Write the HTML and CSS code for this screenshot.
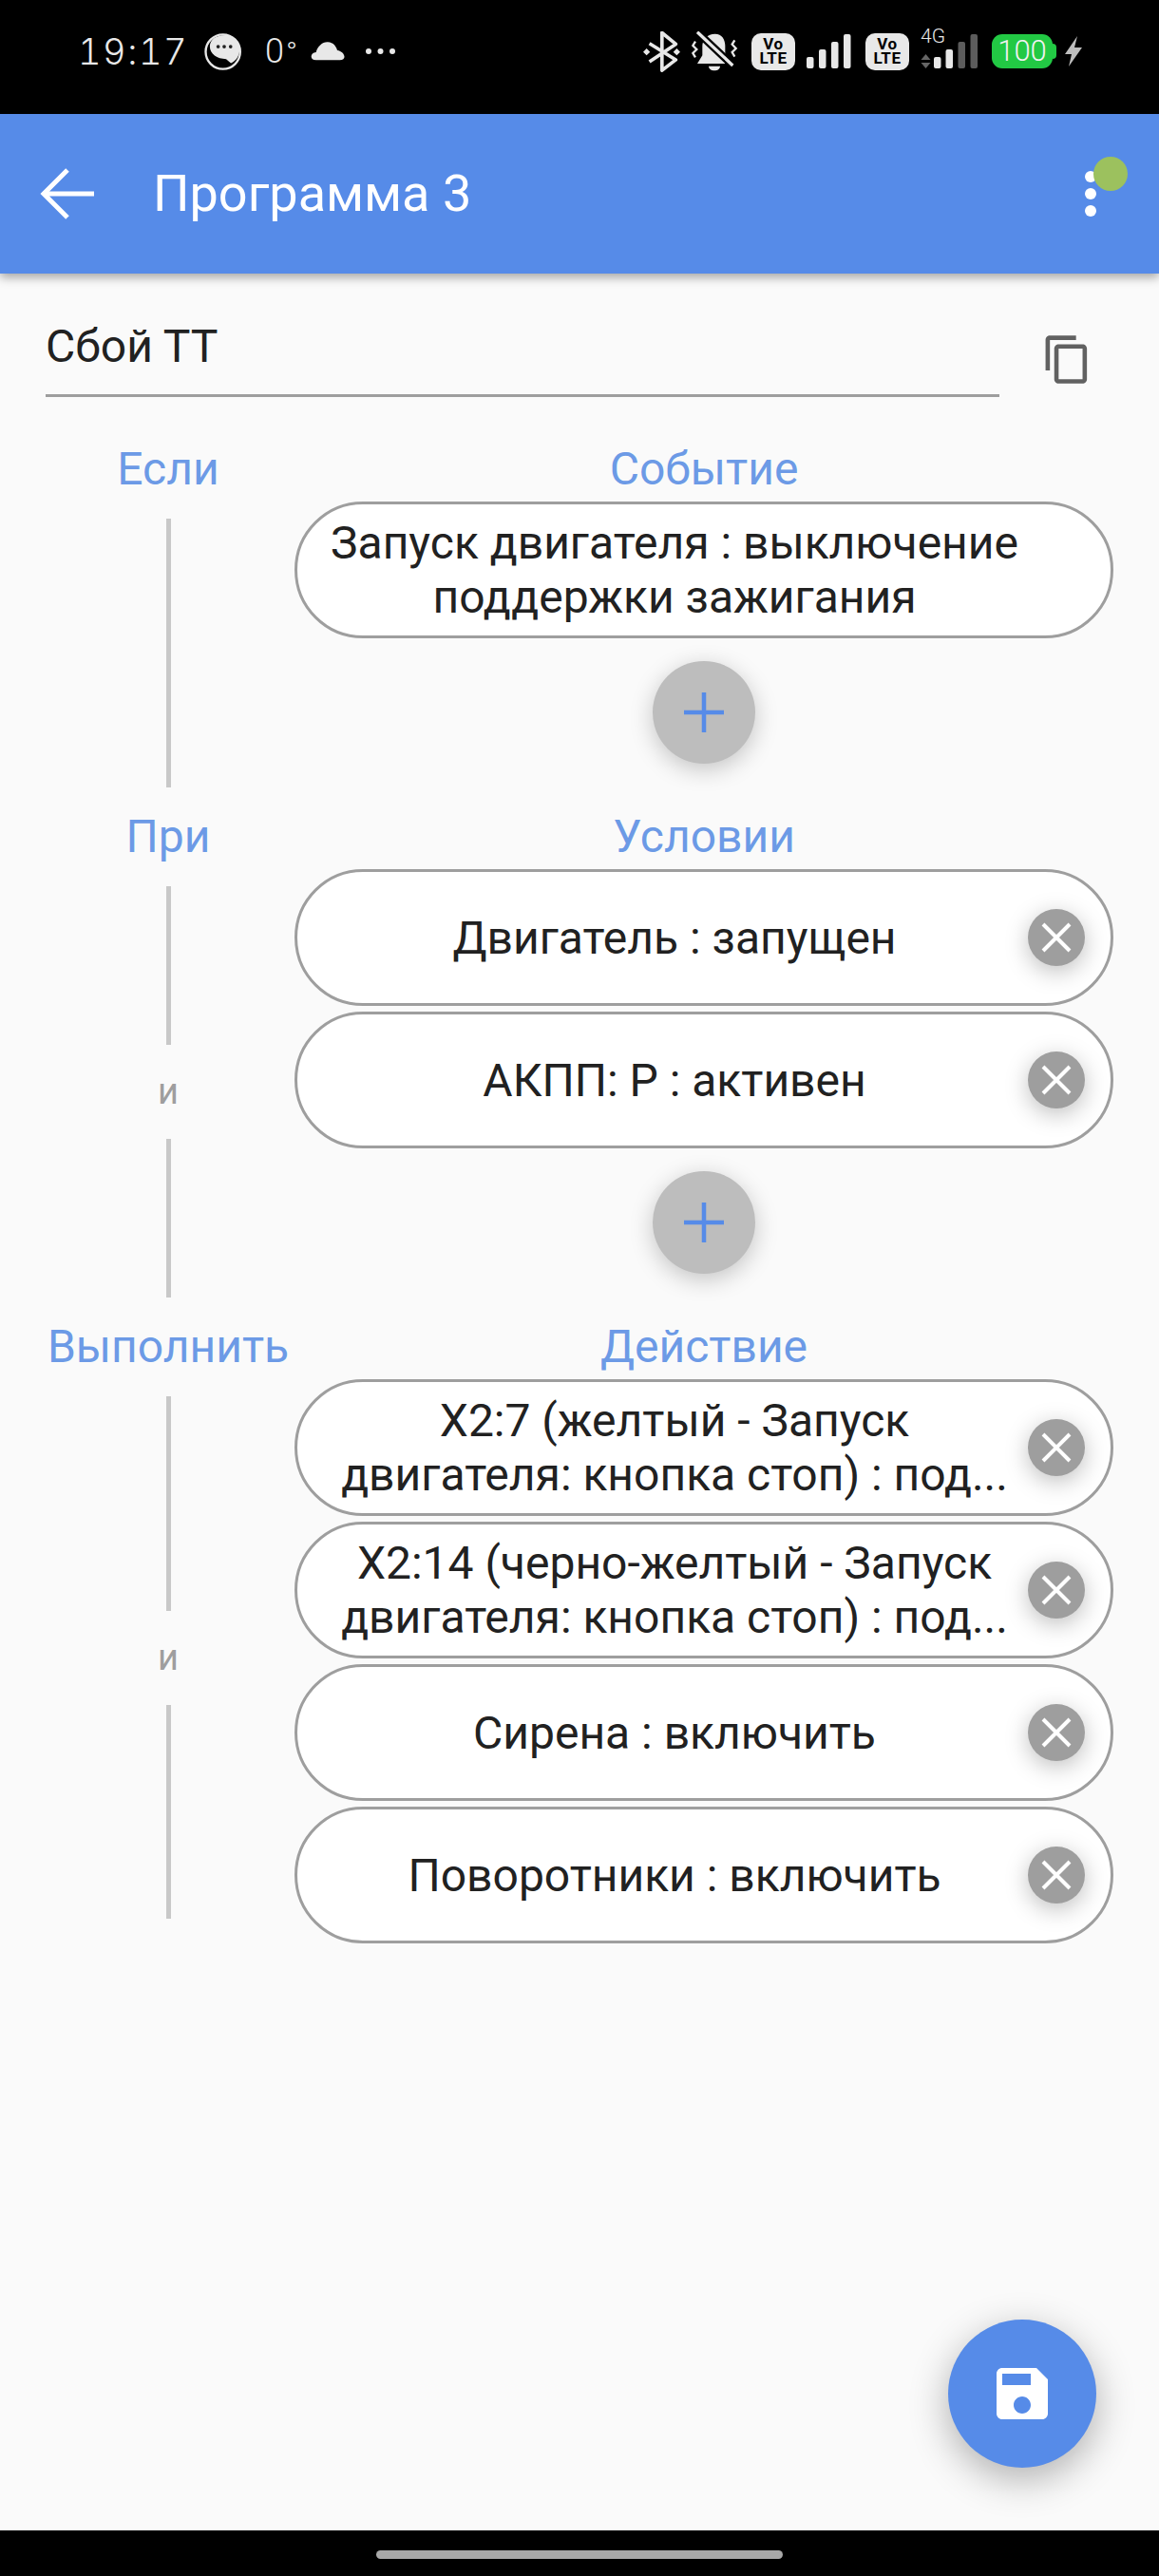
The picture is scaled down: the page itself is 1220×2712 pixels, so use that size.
FILE: index.html
```html
<!DOCTYPE html>
<html lang="en">
<head>
    <meta charset="UTF-8">
    <meta name="viewport" content="width=device-width, initial-scale=1.0">
    <title>Программа 3</title>
    <link rel="stylesheet" href="styles.css">
</head>
<body>
    <div class="screen">
        <div class="status-bar">
            <div class="status-left">
                <span class="time">19:17</span>
                <svg class="chat-icon" width="40" height="39" viewBox="435 30 118 116">
                    <circle cx="493" cy="88" r="54" fill="none" stroke="#e8e8e8" stroke-width="7"/>
                    <path d="M505 36C535 40 548 65 545 85 542 108 530 118 518 124L503 111C475 111 452 95 452 72 452 50 470 35 505 36z" fill="#e8e8e8"/>
                    <circle cx="478" cy="72" r="5.500" fill="#222"/>
                    <circle cx="497" cy="72" r="5.500" fill="#222"/>
                    <circle cx="517" cy="72" r="5.500" fill="#222"/>
                </svg>
                <span class="temp">0<span class="deg">°</span></span>
                <svg class="cloud-icon" width="36" height="20" viewBox="768 55 108 60">
                    <path d="M785 113C765 113 765 90 785 88 790 70 805 55 822 56 840 56 850 72 852 82 875 85 885 113 860 113z" fill="#e8e8e8"/>
                </svg>
                <svg class="more-icon" width="33" height="8" viewBox="0 0 33 8">
                    <circle cx="4" cy="4" r="3" fill="#e8e8e8"/>
                    <circle cx="16.500" cy="4" r="3" fill="#e8e8e8"/>
                    <circle cx="29" cy="4" r="3" fill="#e8e8e8"/>
                </svg>
            </div>
            <div class="status-right">
                <svg width="39" height="43" viewBox="22 22 118 129">
                    <path d="M42 60l84 52-44 34V26l44 36-84 56" fill="none" stroke="#e8e8e8" stroke-width="11" stroke-linejoin="round"/>
                    <path d="M33 76l11 11-11 11-11-11zM129 76l11 11-11 11-11-11z" fill="#e8e8e8"/>
                </svg>
                <svg width="51" height="42" viewBox="176 20 153 126">
                    <path d="M250 28c22 0 32 18 32 38v30l14 26H194l16-26V66c0-20 16-38 40-38z" fill="#e8e8e8"/>
                    <path d="M230 130h36c0 8-8 14-18 14s-18-6-18-14z" fill="#e8e8e8"/>
                    <path d="M194 22l112 106" stroke="#000" stroke-width="24"/>
                    <path d="M194 22l112 106" stroke="#e8e8e8" stroke-width="10"/>
                    <path d="M188 52l-8 13 12 12-12 12 8 13M312 48l-8 13 12 13-12 12 8 14" fill="none" stroke="#e8e8e8" stroke-width="7"/>
                </svg>
                <div class="volte"><span>Vo</span><span>LTE</span></div>
                <svg width="50" height="36" viewBox="0 0 50 36">
                    <rect x="0" y="24" width="7.500" height="12" rx="2" fill="#e8e8e8"/>
                    <rect x="13" y="16" width="7.500" height="20" rx="2" fill="#e8e8e8"/>
                    <rect x="26" y="8" width="7.500" height="28" rx="2" fill="#e8e8e8"/>
                    <rect x="39" y="0" width="7.500" height="36" rx="2" fill="#e8e8e8"/>
                </svg>
                <div class="volte"><span>Vo</span><span>LTE</span></div>
                <div class="net">
                    <span class="net-type">4G</span>
                    <svg class="net-arrows" width="11" height="15" viewBox="0 0 11 15">
                        <path d="M5.500 0l5 6H.5z" fill="#666"/>
                        <path d="M5.500 15l-5-6h10z" fill="#666"/>
                    </svg>
                    <svg class="net-bars" width="46" height="36" viewBox="0 0 46 36">
                        <rect x="0" y="24" width="7.500" height="12" rx="2" fill="#e8e8e8"/>
                        <rect x="12.500" y="16" width="7.500" height="20" rx="2" fill="#e8e8e8"/>
                        <rect x="25.500" y="8" width="7.500" height="28" rx="2" fill="#5c5c5c"/>
                        <rect x="38.500" y="0" width="7.500" height="36" rx="2" fill="#5c5c5c"/>
                    </svg>
                </div>
                <div class="battery"><span>100</span></div>
                <svg class="bolt" width="20" height="32" viewBox="0 0 20 32">
                    <path d="M14 0L1 19h7L5 32l14-20h-8z" fill="#bdbdbd"/>
                </svg>
            </div>
        </div>

        <div class="app-bar">
            <svg class="back" width="60" height="60" viewBox="0 0 60 60">
                <path d="M58 30H6M30 5L5 30l25 25" fill="none" stroke="#fff" stroke-width="5"/>
            </svg>
            <div class="app-title">Программа 3</div>
            <div class="menu">
                <div class="menu-dot"></div>
                <div class="menu-dot"></div>
                <div class="menu-dot"></div>
                <div class="online"></div>
            </div>
        </div>

        <div class="content">
            <div class="name-row">
                <div class="name-field">Сбой ТТ</div>
                <svg class="copy" width="55" height="55" viewBox="0 0 24 24">
                    <path d="M16 1H4c-1.100 0-2 .9-2 2v14h2V3h12V1zm3 4H8c-1.100 0-2 .9-2 2v14c0 1.100.9 2 2 2h11c1.100 0 2-.9 2-2V7c0-1.100-.9-2-2-2zm0 16H8V7h11v14z" fill="#616161"/>
                </svg>
            </div>

            <div class="section">
                <div class="side">
                    <div class="label">Если</div>
                    <div class="line"></div>
                </div>
                <div class="main">
                    <div class="label">Событие</div>
                    <div class="chip"><div class="chip-text">Запуск двигателя : выключение поддержки зажигания</div></div>
                    <div class="add"><svg width="42" height="42" viewBox="0 0 42 42"><path d="M21 0v42M0 21h42" stroke="#568be8" stroke-width="4.500"/></svg></div>
                </div>
            </div>

            <div class="section">
                <div class="side">
                    <div class="label">При</div>
                    <div class="line"></div>
                    <div class="and">и</div>
                    <div class="line"></div>
                </div>
                <div class="main">
                    <div class="label">Условии</div>
                    <div class="chip">
                        <div class="chip-text">Двигатель : запущен</div>
                        <div class="remove"><svg width="32" height="32" viewBox="0 0 32 32"><path d="M2 2l28 28M30 2L2 30" stroke="#fff" stroke-width="4"/></svg></div>
                    </div>
                    <div class="chip">
                        <div class="chip-text">АКПП: P : активен</div>
                        <div class="remove"><svg width="32" height="32" viewBox="0 0 32 32"><path d="M2 2l28 28M30 2L2 30" stroke="#fff" stroke-width="4"/></svg></div>
                    </div>
                    <div class="add"><svg width="42" height="42" viewBox="0 0 42 42"><path d="M21 0v42M0 21h42" stroke="#568be8" stroke-width="4.500"/></svg></div>
                </div>
            </div>

            <div class="section">
                <div class="side">
                    <div class="label">Выполнить</div>
                    <div class="line"></div>
                    <div class="and">и</div>
                    <div class="line"></div>
                </div>
                <div class="main">
                    <div class="label">Действие</div>
                    <div class="chip">
                        <div class="chip-text">X2:7 (желтый - Запуск двигателя: кнопка стоп) : под...</div>
                        <div class="remove"><svg width="32" height="32" viewBox="0 0 32 32"><path d="M2 2l28 28M30 2L2 30" stroke="#fff" stroke-width="4"/></svg></div>
                    </div>
                    <div class="chip">
                        <div class="chip-text">X2:14 (черно-желтый - Запуск двигателя: кнопка стоп) : под...</div>
                        <div class="remove"><svg width="32" height="32" viewBox="0 0 32 32"><path d="M2 2l28 28M30 2L2 30" stroke="#fff" stroke-width="4"/></svg></div>
                    </div>
                    <div class="chip">
                        <div class="chip-text">Сирена : включить</div>
                        <div class="remove"><svg width="32" height="32" viewBox="0 0 32 32"><path d="M2 2l28 28M30 2L2 30" stroke="#fff" stroke-width="4"/></svg></div>
                    </div>
                    <div class="chip">
                        <div class="chip-text">Поворотники : включить</div>
                        <div class="remove"><svg width="32" height="32" viewBox="0 0 32 32"><path d="M2 2l28 28M30 2L2 30" stroke="#fff" stroke-width="4"/></svg></div>
                    </div>
                </div>
            </div>

            <div class="fab">
                <svg width="72" height="72" viewBox="0 0 24 24">
                    <path d="M17 3H5c-1.110 0-2 .9-2 2v14c0 1.100.89 2 2 2h14c1.100 0 2-.9 2-2V7l-4-4zm-5 16c-1.660 0-3-1.340-3-3s1.340-3 3-3 3 1.340 3 3-1.340 3-3 3zm3-10H5V5h10v4z" fill="#fff"/>
                </svg>
            </div>
        </div>

        <div class="nav-bar">
            <div class="home-pill"></div>
        </div>
    </div>
</body>
</html>
```

FILE: styles.css
```css
body {
    margin: 0;
    overflow: hidden;
    font-family: Roboto, "Noto Sans", sans-serif;
    background: #000;
}

.screen {
    display: flex;
    flex-direction: column;
    width: 1220px;
    height: 2712px;
}

/* status bar */

.status-bar {
    display: flex;
    justify-content: space-between;
    align-items: center;
    height: 120px;
    padding: 0 80px 12px 82px;
    box-sizing: border-box;
    background: #000;
    color: #e8e8e8;
}

.status-left {
    display: flex;
    align-items: center;
}

.time {
    width: 113px;
    font-family: Inter, Roboto, sans-serif;
    font-size: 38px;
    font-weight: 300;
    font-feature-settings: "tnum" 1;
    letter-spacing: 1.5px;
    line-height: 40px;
    white-space: nowrap;
}

.chat-icon {
    margin-left: 20px;
}

.temp {
    width: 31px;
    margin-left: 24px;
    font-size: 36px;
    font-weight: 300;
    line-height: 40px;
}

.deg {
    margin-left: 2px;
    font-size: 32px;
}

.cloud-icon {
    margin-left: 17px;
}

.more-icon {
    margin-left: 21px;
}

.status-right {
    display: flex;
    align-items: center;
    gap: 12px;
}

.volte {
    display: flex;
    flex-direction: column;
    align-items: center;
    justify-content: center;
    width: 46px;
    height: 39px;
    border-radius: 10px;
    background: #e8e8e8;
    color: #000;
    font-size: 17px;
    font-weight: 700;
    letter-spacing: 0.5px;
    line-height: 15px;
}

.net {
    position: relative;
    width: 63px;
    height: 36px;
}

.net-type {
    position: absolute;
    top: -8px;
    left: 0;
    font-size: 21px;
    font-weight: 300;
    line-height: 20px;
}

.net-arrows {
    position: absolute;
    left: 0;
    bottom: 0;
}

.net-bars {
    position: absolute;
    right: 3px;
    bottom: 0;
}

.battery {
    display: flex;
    align-items: center;
    justify-content: center;
    position: relative;
    width: 64px;
    height: 36px;
    margin-right: 5px;
    border-radius: 11px;
    background: #22c944;
    color: #f2f2f2;
    font-size: 31px;
    font-weight: 300;
    line-height: 36px;
}

.battery::after {
    content: "";
    position: absolute;
    top: 10px;
    right: -4px;
    width: 4px;
    height: 16px;
    border-radius: 0 4px 4px 0;
    background: #22c944;
}

.bolt {
    margin-left: -5px;
}

/* app bar */

.app-bar {
    display: flex;
    align-items: center;
    position: relative;
    z-index: 1;
    height: 168px;
    background: #568be8;
    box-shadow: 0 4px 10px rgba(0, 0, 0, 0.35);
}

.back {
    margin-left: 41px;
}

.app-title {
    margin-left: 60px;
    color: #fff;
    font-size: 54px;
    line-height: 60px;
}

.menu {
    display: flex;
    flex-direction: column;
    align-items: center;
    gap: 6px;
    position: relative;
    margin-left: auto;
    margin-right: 66px;
}

.menu-dot {
    width: 12px;
    height: 12px;
    border-radius: 50%;
    background: #fff;
}

.online {
    position: absolute;
    top: -15px;
    left: 9px;
    width: 36px;
    height: 36px;
    border-radius: 50%;
    background: #9cc15e;
}

/* content */

.content {
    flex: 1;
    position: relative;
    background: #fafafa;
}

.name-row {
    display: flex;
    align-items: center;
    height: 180px;
    padding-left: 48px;
}

.name-field {
    width: 1004px;
    height: 130px;
    margin-bottom: 50px;
    box-sizing: border-box;
    border-bottom: 3px solid #9e9e9e;
    color: #212121;
    font-size: 48px;
    line-height: 154px;
}

.copy {
    margin-left: 44px;
}

.section {
    display: flex;
    padding-left: 48px;
}

.side {
    display: flex;
    flex-direction: column;
    align-items: center;
    width: 258px;
    padding-bottom: 26px;
    box-sizing: border-box;
}

.side .label {
    width: 100%;
    margin-bottom: 18px;
}

.label {
    height: 60px;
    color: #6c9ae6;
    font-size: 48px;
    line-height: 52px;
    text-align: center;
}

.line {
    flex: 1;
    width: 5px;
    background: #c8c8c8;
}

.and {
    height: 99px;
    color: #9e9e9e;
    font-size: 38px;
    line-height: 99px;
}

.main {
    display: flex;
    flex-direction: column;
    width: 862px;
    margin-left: 4px;
}

.chip {
    display: flex;
    align-items: center;
    justify-content: center;
    position: relative;
    height: 144px;
    margin-bottom: 6px;
    box-sizing: border-box;
    border: 3px solid #9e9e9e;
    border-radius: 72px;
    background: #fff;
}

.chip:last-child {
    margin-bottom: 0;
}

.chip-text {
    width: 730px;
    margin-right: 62px;
    color: #212121;
    font-size: 48px;
    line-height: 57px;
    text-align: center;
}

.remove {
    display: flex;
    align-items: center;
    justify-content: center;
    position: absolute;
    top: 39px;
    right: 27px;
    width: 60px;
    height: 60px;
    border-radius: 50%;
    background: #9e9e9e;
    box-shadow: 0 6px 24px rgba(0, 0, 0, 0.25);
}

.add {
    display: flex;
    align-items: center;
    justify-content: center;
    align-self: center;
    width: 108px;
    height: 108px;
    margin-top: 18px;
    margin-bottom: 51px;
    border-radius: 50%;
    background: #bdbdbd;
    box-shadow: 0 6px 24px rgba(0, 0, 0, 0.22);
}

.fab {
    display: flex;
    align-items: center;
    justify-content: center;
    position: absolute;
    top: 2154px;
    left: 998px;
    width: 156px;
    height: 156px;
    border-radius: 50%;
    background: #568be8;
    box-shadow: 0 12px 40px rgba(0, 0, 0, 0.3);
}

/* bottom bar */

.nav-bar {
    display: flex;
    align-items: center;
    justify-content: center;
    height: 48px;
    background: #000;
}

.home-pill {
    width: 428px;
    height: 9px;
    margin-top: 2px;
    border-radius: 5px;
    background: #a8a8a8;
}
```
